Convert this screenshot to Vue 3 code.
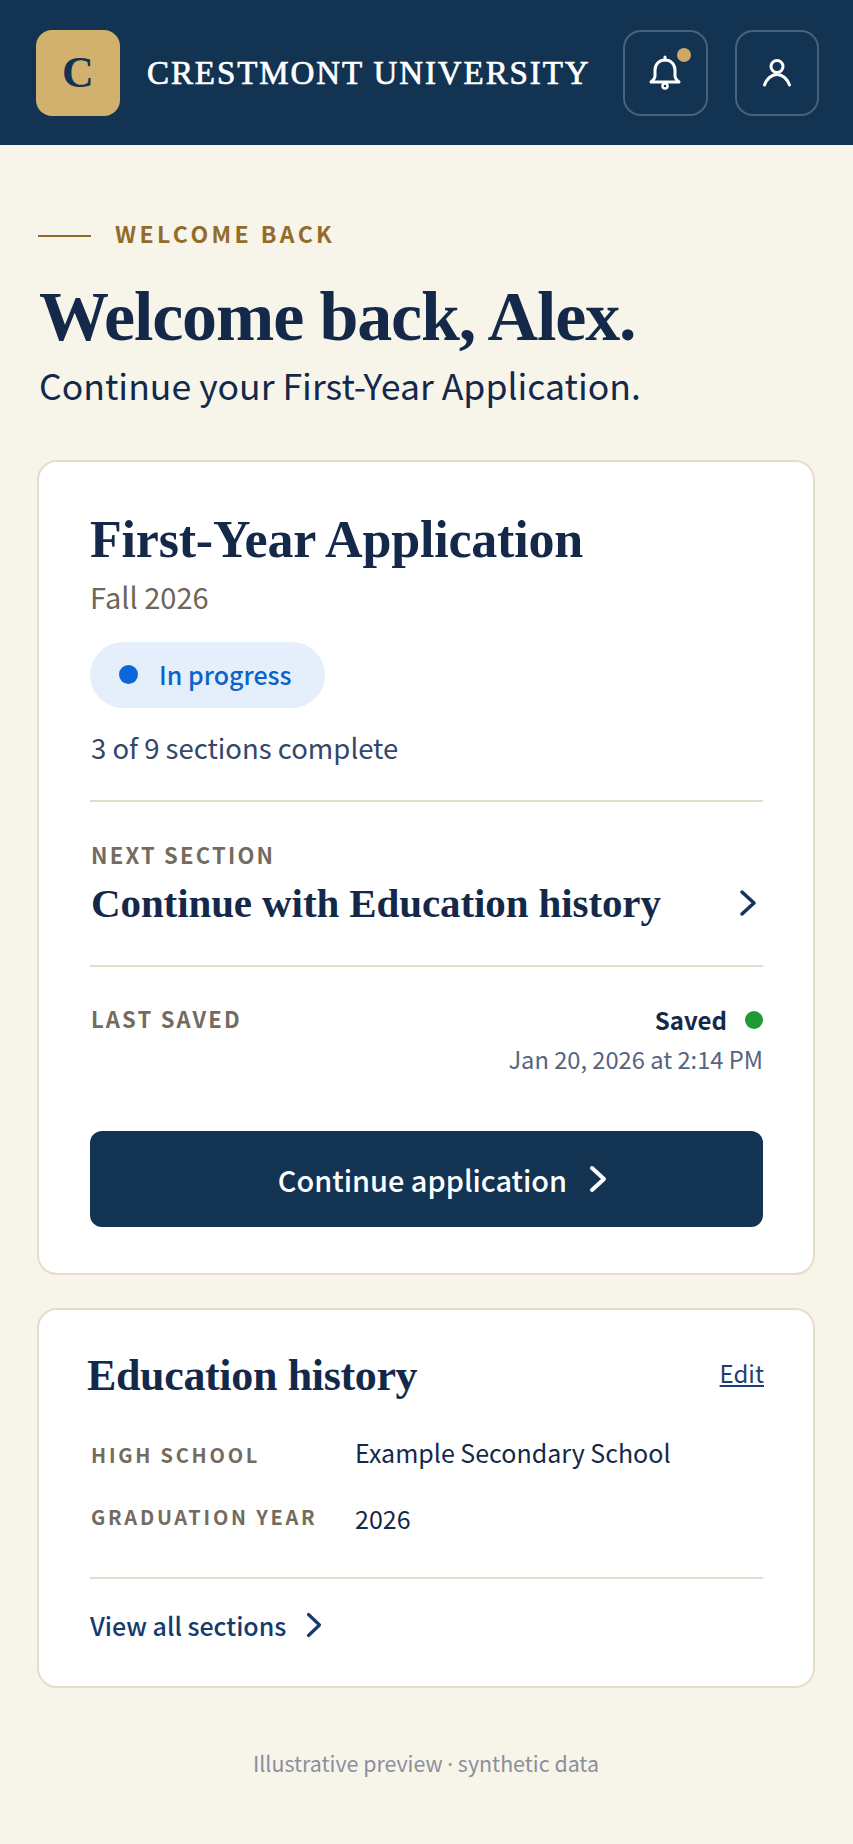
<template>
  <div class="page">
    <header class="topbar">
      <div class="crest">C</div>
      <div class="brand">CRESTMONT UNIVERSITY</div>
      <button class="icon-btn bell" type="button" aria-label="Notifications">
        <svg width="34" height="36" viewBox="0 0 34 36" fill="none" stroke="#fff" stroke-width="3" stroke-linecap="round" stroke-linejoin="round">
          <path d="M7 15c0-6 4.500-10 10-10s10 4 10 10v6c0 2 1.500 4 4 6H3c2.500-2 4-4 4-6z" />
          <path d="M17 2v3" />
          <circle cx="17" cy="31" r="2.500" stroke-width="2.500" />
        </svg>
        <span class="bell-dot"></span>
      </button>
      <button class="icon-btn user" type="button" aria-label="Account">
        <svg width="30" height="28" viewBox="0 0 30 28" fill="none" stroke="#fff" stroke-width="3" stroke-linecap="round">
          <circle cx="15" cy="7.500" r="6" />
          <path d="M2.500 26c2-6 7-10.500 12.500-10.500s10.500 4.500 12.500 10.500" />
        </svg>
      </button>
    </header>

    <main class="content">
      <div class="eyebrow">
        <span class="eyebrow-line"></span>
        <span>WELCOME BACK</span>
      </div>
      <h1>Welcome back, Alex.</h1>
      <p class="lead">Continue your First-Year Application.</p>

      <section class="card app-card">
        <h2>First-Year Application</h2>
        <div class="term">Fall 2026</div>
        <div class="pill"><span class="pill-dot"></span>In progress</div>
        <div class="progress">3 of 9 sections complete</div>

        <div class="next">
          <div class="label">NEXT SECTION</div>
          <div class="next-row">
            <span class="next-title">Continue with Education history</span>
            <svg width="18" height="28" viewBox="0 0 18 28" fill="none" stroke="#15315c" stroke-width="3.500" stroke-linecap="round" stroke-linejoin="round">
              <path d="M3 3l12 11-12 11" />
            </svg>
          </div>
        </div>

        <div class="saved">
          <div class="label">LAST SAVED</div>
          <div class="saved-info">
            <div class="saved-state">Saved<span class="saved-dot"></span></div>
            <div class="saved-date">Jan 20, 2026 at 2:14 PM</div>
          </div>
        </div>

        <button class="primary" type="button">
          Continue application
          <svg width="18" height="30" viewBox="0 0 18 30" fill="none" stroke="#fff" stroke-width="4" stroke-linecap="round" stroke-linejoin="round">
            <path d="M3 4l12 11-12 11" />
          </svg>
        </button>
      </section>

      <section class="card edu-card">
        <div class="edu-head">
          <h3>Education history</h3>
          <a class="edit" href="#">Edit</a>
        </div>
        <div class="edu-grid">
          <div class="edu-labels">
            <span v-for="row in rows" :key="row.label" class="label wide">{{ row.label }}</span>
          </div>
          <div class="edu-values">
            <span v-for="row in rows" :key="row.label" class="value">{{ row.value }}</span>
          </div>
        </div>
        <a class="view-all" href="#">
          View all sections
          <svg width="16" height="26" viewBox="0 0 16 26" fill="none" stroke="#153a70" stroke-width="3.200" stroke-linecap="round" stroke-linejoin="round">
            <path d="M2.500 2.500l11 10.500-11 10.500" />
          </svg>
        </a>
      </section>

      <footer class="foot">Illustrative preview <span class="sep">·</span> synthetic data</footer>
    </main>
  </div>
</template>

<script setup>
const rows = [
  { label: 'HIGH SCHOOL', value: 'Example Secondary School' },
  { label: 'GRADUATION YEAR', value: '2026' },
];
</script>

<style>
html, body {
  margin: 0;
  background: #f7f4ea;
}
</style>

<style scoped>
.page {
  width: 853px;
  min-height: 1844px;
  background: #f7f4ea;
  font-family: "Noto Sans CJK SC", "Noto Sans", sans-serif;
  color: #14294a;
}

.topbar {
  height: 145px;
  box-sizing: border-box;
  background: #133353;
  display: flex;
  align-items: center;
  padding: 0 34px 0 36px;
}

.crest {
  width: 84px;
  height: 86px;
  border-radius: 16px;
  background: #d2b06e;
  color: #133353;
  font: 700 44px/86px "Liberation Serif", serif;
  text-align: center;
}

.brand {
  margin-left: 27px;
  flex: 1;
  color: #fff;
  font: 400 33px/40px "Liberation Serif", serif;
  -webkit-text-stroke: 0.7px #fff;
  letter-spacing: 1.9px;
  white-space: nowrap;
}

.icon-btn {
  position: relative;
  width: 85px;
  height: 86px;
  box-sizing: border-box;
  border: 2px solid #47617f;
  border-radius: 18px;
  background: none;
  padding: 0;
  display: flex;
  align-items: center;
  justify-content: center;
}

.icon-btn.bell {
  margin-right: 27px;
}

.icon-btn.bell svg {
  margin-right: 2px;
}

.icon-btn.user {
  width: 84px;
}

.bell-dot {
  position: absolute;
  top: 16px;
  right: 15px;
  width: 14px;
  height: 14px;
  border-radius: 50%;
  background: #cda765;
}

.content {
  padding: 73px 38px 0 37px;
}

.eyebrow {
  display: flex;
  align-items: center;
  gap: 24px;
  color: #926c2b;
  font-size: 23px;
  line-height: 30px;
  font-weight: 700;
  letter-spacing: 3.4px;
}

.eyebrow-line {
  width: 53px;
  height: 2px;
  margin: 5px 0 0 1px;
  background: #926c2b;
}

h1 {
  margin: 29px 0 0 2px;
  font: 700 70px/80px "Liberation Serif", serif;
  letter-spacing: -1.15px;
  color: #14294a;
}

.lead {
  margin: 3.500px 0 0 2px;
  font-size: 35.600px;
  line-height: 48px;
  color: #14294a;
}

.card {
  background: #fff;
  border: 2px solid #e6dccb;
  border-radius: 20px;
  box-sizing: border-box;
}

.app-card {
  margin-top: 51px;
  height: 815px;
  padding: 45px 50px 0 51px;
}

h2 {
  margin: 0;
  font: 700 52px/66px "Liberation Serif", serif;
  letter-spacing: -0.2px;
  color: #14294a;
}

.term {
  margin-top: 3.500px;
  font-size: 29px;
  line-height: 40px;
  color: #6f6558;
}

.pill {
  margin-top: 26px;
  width: 235px;
  height: 66px;
  box-sizing: border-box;
  padding: 0 0 2px 29px;
  display: flex;
  align-items: center;
  gap: 21px;
  border-radius: 33px;
  background: #e5effb;
  color: #0b63c9;
  font-size: 25px;
  font-weight: 500;
}

.pill-dot {
  width: 19px;
  height: 19px;
  border-radius: 50%;
  background: #0b67d8;
}

.progress {
  margin: 20px 0 0 1px;
  font-size: 27.500px;
  line-height: 38px;
  color: #33466b;
}

.next {
  margin-top: 34px;
  height: 167px;
  box-sizing: border-box;
  border-top: 2px solid #e6dccb;
  border-bottom: 2px solid #e6dccb;
  padding: 38px 6px 0 1px;
}

.label {
  font-size: 22px;
  line-height: 28px;
  font-weight: 700;
  letter-spacing: 2.2px;
  color: #746b5f;
}

.next-row {
  display: flex;
  justify-content: space-between;
  align-items: center;
  margin-top: 10px;
}

.next-title {
  font: 700 41px/50px "Liberation Serif", serif;
  letter-spacing: -0.1px;
  color: #14294a;
}

.saved {
  display: flex;
  justify-content: space-between;
  padding: 37px 0 0 1px;
}

.saved-info {
  text-align: right;
}

.saved-state {
  display: flex;
  justify-content: flex-end;
  align-items: center;
  gap: 18px;
  font-size: 24px;
  line-height: 32px;
  font-weight: 700;
  color: #14294a;
}

.saved-dot {
  width: 18px;
  height: 18px;
  border-radius: 50%;
  background: #1f9a35;
}

.saved-date {
  margin-top: 5px;
  font-size: 23.700px;
  line-height: 36px;
  color: #55647f;
}

.primary {
  margin-top: 54px;
  width: 100%;
  height: 96px;
  border: 0;
  border-radius: 12px;
  padding: 0 0 0 32px;
  background: #133353;
  color: #fff;
  font: 500 28.900px/40px "Noto Sans CJK SC", "Noto Sans", sans-serif;
  display: flex;
  align-items: center;
  justify-content: center;
  gap: 22px;
}

.edu-card {
  margin-top: 33px;
  height: 380px;
  padding: 36px 50px 0 51px;
}

.edu-head {
  display: flex;
  justify-content: space-between;
  align-items: center;
}

h3 {
  margin: 0 0 0 -3px;
  font: 700 44px/60px "Liberation Serif", serif;
  letter-spacing: -0.35px;
  color: #14294a;
}

.edit {
  margin: 0 -1px 6px 0;
  font-size: 24px;
  color: #1d3e74;
}

.edu-grid {
  display: flex;
  margin-top: 29px;
}

.edu-labels {
  width: 265px;
  display: flex;
  flex-direction: column;
  gap: 34px;
  padding-top: 6px;
}

.edu-values {
  display: flex;
  flex-direction: column;
  gap: 32px;
}

.wide {
  padding-left: 1px;
  font-size: 20px;
  letter-spacing: 2.750px;
  white-space: nowrap;
}

.value {
  font-size: 25px;
  line-height: 34px;
  color: #14294a;
}

.view-all {
  margin-top: 42px;
  padding-top: 27px;
  border-top: 2px solid #e6dccb;
  display: flex;
  align-items: center;
  gap: 20px;
  font-size: 25px;
  line-height: 38px;
  font-weight: 500;
  color: #153a70;
  text-decoration: none;
}

.foot {
  margin-top: 59px;
  text-align: center;
  font-size: 21.400px;
  line-height: 32px;
  color: #8b8f9c;
}

.sep {
  font-family: "Noto Sans", sans-serif;
}
</style>
